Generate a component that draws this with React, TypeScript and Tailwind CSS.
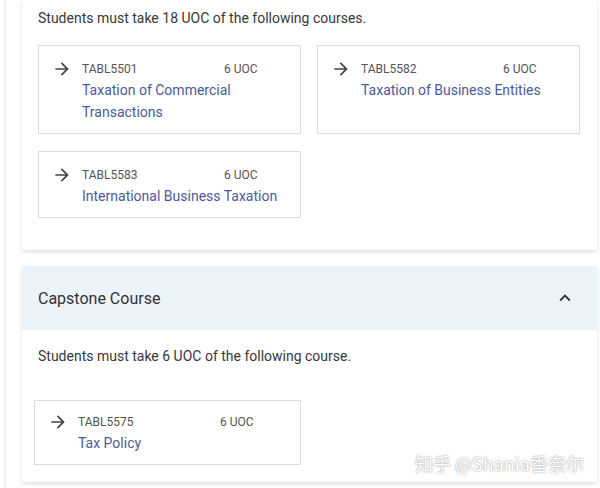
import React from "react";

interface Course {
  code: string;
  uoc: string;
  title: string;
}

const coreCourses: Course[] = [
  { code: "TABL5501", uoc: "6 UOC", title: "Taxation of Commercial Transactions" },
  { code: "TABL5582", uoc: "6 UOC", title: "Taxation of Business Entities" },
  { code: "TABL5583", uoc: "6 UOC", title: "International Business Taxation" },
];

const ArrowIcon = () => (
  <svg width="20" height="20" viewBox="0 0 24 24" className="flex-shrink-0 text-[#444]" fill="currentColor">
    <path d="M12 4l-1.41 1.41L16.17 11H4v2h12.17l-5.58 5.59L12 20l8-8z" />
  </svg>
);

const CourseBox = ({ course, className = "" }: { course: Course; className?: string }) => (
  <div className={`flex border border-[#dcdcdc] bg-white pl-[13px] pr-4 pb-[10px] ${className}`}>
    <div className="mt-[-2px]">
      <ArrowIcon />
    </div>
    <div className="ml-[10px] flex flex-col">
      <div className="flex text-[12px] leading-[16px] text-[#555]">
        <span className="w-[142px]">{course.code}</span>
        <span>{course.uoc}</span>
      </div>
      <p className="mt-[2px] w-[200px] text-[14px] leading-[22px] text-[#4b5b98]">{course.title}</p>
    </div>
  </div>
);

export default function App() {
  return (
    <div
      className="relative h-[488px] w-[600px] overflow-hidden bg-white"
      style={{ fontFamily: "Roboto, 'Noto Sans CJK SC', sans-serif" }}
    >
      <div className="absolute left-[4px] top-0 h-full w-[2px] bg-[#f0f0f0]" />
      <div className="flex flex-col gap-4 pl-[22px] pr-[3px]">
        <div className="bg-white px-4 pt-[8px] pb-[32px] shadow-[0_2px_4px_rgba(0,0,0,0.12)]">
          <p className="text-[14px] leading-[20px] text-[#383838]">
            Students must take 18 UOC of the following courses.
          </p>
          <div className="mt-[17px] grid grid-cols-[263px_263px] gap-x-4 gap-y-[17px]">
            {coreCourses.map((c) => (
              <CourseBox key={c.code} course={c} className="pt-[15px]" />
            ))}
          </div>
        </div>

        <div className="bg-white shadow-[0_2px_4px_rgba(0,0,0,0.12)]">
          <div className="flex h-[64px] items-center justify-between bg-[#eaf4fa] pl-4 pr-[21px]">
            <span className="pt-[2px] text-[16px] text-[#333]">Capstone Course</span>
            <svg width="22" height="22" viewBox="0 0 24 24" fill="#333">
              <path d="M12 8l-6 6 1.41 1.41L12 10.83l4.59 4.58L18 14z" />
            </svg>
          </div>
          <div className="px-4 pt-4 pb-[17px]">
            <p className="text-[14px] leading-[20px] text-[#383838]">
              Students must take 6 UOC of the following course.
            </p>
            <div className="mt-[34px] -ml-1 w-[267px]">
              <CourseBox course={{ code: "TABL5575", uoc: "6 UOC", title: "Tax Policy" }} className="pt-[13px]" />
            </div>
          </div>
        </div>
      </div>

      <div
        className="absolute left-[415px] top-[450px] text-[18px] leading-[26px] text-white [text-shadow:0_0_2px_rgba(0,0,0,0.5)]"
        style={{ fontFamily: "'Noto Sans CJK SC', sans-serif" }}
      >
        知乎 @Shania香奈尔
      </div>
    </div>
  );
}
